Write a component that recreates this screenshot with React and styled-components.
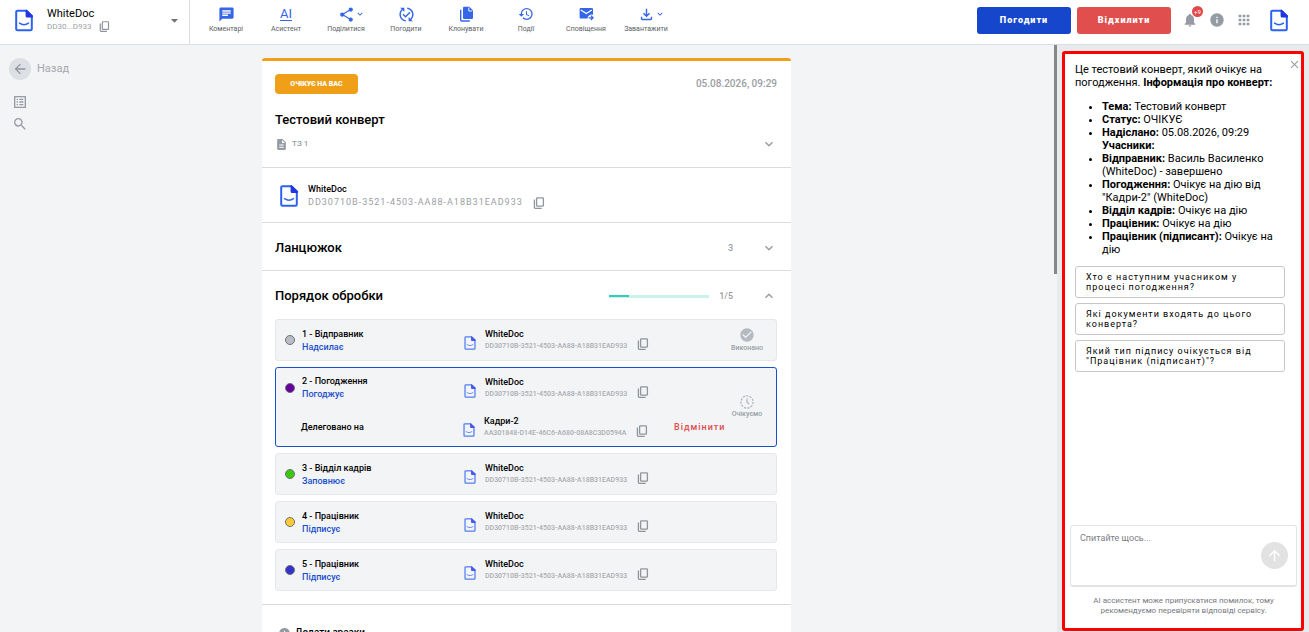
import React from "react";
import styled, { createGlobalStyle } from "styled-components";
import {
  MdChat, MdShare, MdPublishedWithChanges, MdHistory,
  MdOutlineFileDownload, MdExpandMore, MdExpandLess, MdArrowBack, MdListAlt, MdSearch,
  MdArrowDropDown, MdNotifications, MdInfo, MdApps, MdDescription, MdCheckCircle,
  MdClose, MdArrowUpward,
} from "react-icons/md";

const GlobalStyle = createGlobalStyle`
  * { box-sizing: border-box; }
  body { margin: 0; background: #f3f4f6; color: #000; font: 400 9px/14px Roboto, "Liberation Sans", sans-serif; }
  button { font: inherit; color: inherit; background: none; border: 0; padding: 0; cursor: pointer; }
  svg { display: block; flex: none; }
`;

const Page = styled.div`
  height: 100vh;
  display: flex;
  flex-direction: column;
  overflow: hidden;
`;

const Header = styled.header`
  display: flex;
  height: 45px;
  flex: none;
  background: #fff;
  border-bottom: 1px solid #dadde1;
`;

const Account = styled.button`
  display: flex;
  align-items: center;
  width: 190px;
  padding: 0 6px 4px 15px;
  border-right: 1px solid #dadde1;
  text-align: left;
`;

const AccountText = styled.span`
  flex: 1;
  margin-left: 14px;
`;

const AccountName = styled.span`
  display: block;
  font-size: 11px;
  line-height: 13px;
`;

const AccountId = styled.span`
  display: flex;
  align-items: center;
  gap: 7px;
  font-size: 8px;
  line-height: 13px;
  color: #9a9fa5;
`;

const Toolbar = styled.nav`
  display: flex;
  padding-left: 6px;
  flex: 1;
`;

const Tool = styled.button`
  width: 60px;
  display: flex;
  flex-direction: column;
  align-items: center;
  padding-top: 6px;
  gap: 1px;
  font-size: 7px;
  line-height: 13px;
  color: #5c6066;
`;

const ToolIcon = styled.span`
  display: flex;
  align-items: center;
  height: 16px;
  padding-left: ${(p) => (p.$menu ? 10 : 0)}px;
  color: #3565e8;
`;

const AiMark = styled.span`
  font-size: 13px;
  line-height: 13px;
  border-bottom: 1px solid #3565e8;
`;

const HeaderActions = styled.div`
  display: flex;
  align-items: center;
  padding: 0 21px 4px 0;
`;

const ActionButton = styled.button`
  width: 94px;
  height: 27px;
  margin-right: 6px;
  border-radius: 3px;
  background: ${(p) => p.$color};
  color: #fff;
  font-size: 9px;
  font-weight: 900;
  letter-spacing: 1px;
`;

const HeaderIcons = styled.div`
  display: flex;
  align-items: center;
  gap: 11px;
  margin: 0 18px 0 5px;
  color: #959ba3;
`;

const IconButton = styled.button`
  display: flex;
  position: relative;
  color: ${(p) => p.$color || "#959ba3"};
`;

const Badge = styled.span`
  position: absolute;
  top: -6px;
  right: -5px;
  width: 11px;
  height: 11px;
  border-radius: 50%;
  background: #e04a4a;
  color: #fff;
  font-size: 6px;
  line-height: 11px;
  text-align: center;
`;

const Body = styled.div`
  display: flex;
  flex: 1;
  min-height: 0;
`;

const Main = styled.main`
  flex: 1;
  min-width: 0;
  display: grid;
  grid-template-columns: 1fr minmax(0, 529px) 1fr;
  padding-top: 13px;
  overflow: hidden;
`;

const SideNav = styled.nav`
  display: flex;
  flex-direction: column;
  align-items: flex-start;
  gap: 6px;
  padding-left: 9px;
`;

const BackLink = styled.a`
  display: flex;
  align-items: center;
  gap: 6px;
  margin-bottom: 8px;
  font-size: 11px;
  color: #a3a8ae;
  text-decoration: none;
`;

const BackCircle = styled.span`
  display: grid;
  place-items: center;
  width: 22px;
  height: 22px;
  border-radius: 50%;
  background: #dcdfe3;
  color: #8f959c;
`;

const SideItem = styled(IconButton)`
  margin-left: 3px;
`;

const Scrollbar = styled.div`
  width: 4px;
  padding-left: 1px;
`;

const ScrollThumb = styled.div`
  height: 39%;
  background: #868789;
`;

const Card = styled.article`
  background: #fff;
  border-top: 3px solid #f09f19;
  border-radius: 3px 3px 0 0;
  align-self: start;
`;

const Section = styled.section`
  padding: ${(p) => p.$pad};
  border-bottom: 1px solid #d9dbde;
`;

const Line = styled.div`
  display: flex;
  align-items: center;
  gap: ${(p) => p.$gap || 0}px;
`;

const Status = styled.span`
  min-width: 83px;
  padding: 0 14px;
  border-radius: 4px;
  background: #f09f19;
  color: #fff;
  font-size: 7px;
  font-weight: 900;
  line-height: 20px;
  text-align: center;
`;

const Meta = styled.span`
  margin-left: ${(p) => (p.$end ? "auto" : 0)};
  font-size: ${(p) => p.$size || 9}px;
  font-weight: ${(p) => p.$weight || 500};
  color: #999ea4;
  letter-spacing: ${(p) => p.$track || 0}px;
`;

const Title = styled.h1`
  margin: 18px 0 8px;
  font-size: 13px;
  line-height: 16px;
  font-weight: 500;
`;

const Heading = styled.h2`
  flex: 1;
  margin: 0;
  font-size: ${(p) => p.$size || 13}px;
  line-height: 16px;
  font-weight: 500;
`;

const Toggle = styled(IconButton)`
  margin-left: ${(p) => p.$gap || "auto"};
`;

const Progress = styled.div`
  width: 100px;
  height: 3px;
  margin-right: 10px;
  background: #c9f2ea;
`;

const ProgressValue = styled.div`
  height: 2px;
  background: #36cdb8;
`;

const OwnerText = styled.div`
  line-height: 13px;
`;

const Strong = styled.div`
  font-weight: 500;
`;

const Steps = styled.ol`
  display: flex;
  flex-direction: column;
  gap: 6px;
  margin: 15px 0 0;
  padding: 0;
  list-style: none;
`;

const Step = styled.li`
  display: flex;
  padding: 0 6px 0 9px;
  border: 1px solid ${(p) => (p.$active ? "#1a4fcb" : "#e5e7ea")};
  border-radius: 3px;
  background: #f3f4f6;
`;

const StepBody = styled.div`
  flex: 1;
  min-width: 0;
`;

const StepRow = styled.div`
  display: flex;
  align-items: center;
  height: ${(p) => (p.$compact ? 39 : 40)}px;
`;

const Dot = styled.span`
  width: 10px;
  height: 10px;
  margin-right: 7px;
  border: 1px solid #6d7178;
  border-radius: 50%;
  background: ${(p) => p.$color};
`;

const StepName = styled.div`
  flex: none;
  width: ${(p) => (p.$indent ? 178 : 162)}px;
  padding-left: ${(p) => (p.$indent ? 16 : 0)}px;
  font-weight: 500;
`;

const Role = styled.div`
  color: #1a4fcb;
  line-height: 13px;
`;

const Org = styled.div`
  display: flex;
  align-items: flex-end;
  svg { margin-bottom: 2px; }
`;

const StepOrg = styled.div`
  width: 152px;
  margin-left: 9px;
  line-height: 12px;
  white-space: nowrap;
`;

const StepId = styled.div`
  font-size: 7px;
  font-weight: 500;
  color: #a9adb2;
`;

const Cancel = styled.button`
  margin-left: 26px;
  color: #dd4b4b;
  font-weight: 500;
  letter-spacing: 1px;
`;

const StepState = styled.div`
  display: flex;
  flex: none;
  flex-direction: column;
  align-items: center;
  justify-content: center;
  width: 46px;
  font-size: 7px;
  font-weight: 500;
  line-height: 10px;
  color: #999ea4;
`;

const Aside = styled.aside`
  display: flex;
  width: 252px;
  padding: 6px 5px 1px;
  background: #e9eaee;
`;

const Panel = styled.section`
  position: relative;
  display: flex;
  flex-direction: column;
  flex: 1;
  padding: 9px 4px 12px 5px;
  border: 3px solid #fe0000;
  border-radius: 3px;
  background: #fff;
`;

const CloseButton = styled(IconButton)`
  position: absolute;
  top: 4px;
  right: 0;
`;

const Message = styled.div`
  padding: 0 12px 0 5px;
  font-size: 11px;
  line-height: 13px;

  p { margin: 0; }
  ul { margin: 11px 0 10px; padding-left: 27px; }
`;

const Suggestions = styled.div`
  display: flex;
  flex-direction: column;
  gap: 5px;
  padding: 0 12px 0 5px;
`;

const Suggestion = styled.button`
  padding: 5px 10px;
  border: 1px solid #c6c7c9;
  border-radius: 3px;
  font-size: 9px;
  line-height: 10px;
  letter-spacing: 1px;
  text-align: left;
`;

const Prompt = styled.form`
  display: flex;
  align-items: center;
  height: 62px;
  margin-top: auto;
  padding-right: 8px;
  border: 1px solid #e2e4e6;
  border-bottom-width: 2px;
  border-radius: 3px;
`;

const PromptInput = styled.textarea`
  flex: 1;
  align-self: stretch;
  min-width: 0;
  padding: 5px 9px;
  border: 0;
  outline: 0;
  resize: none;
  background: none;
  font: 400 9px/14px Roboto, "Liberation Sans", sans-serif;
  &::placeholder { color: #7d8085; }
`;

const Send = styled.button`
  display: grid;
  place-items: center;
  width: 27px;
  height: 27px;
  border-radius: 50%;
  background: #e2e2e2;
  color: #fff;
`;

const Note = styled.p`
  margin: 9px 0 0;
  padding: 0 16px;
  font-size: 8px;
  line-height: 10px;
  color: #75797f;
  text-align: center;
`;

const DocLogo = ({ width = 18, height = 22, soft = false }) => (
  <svg width={width} height={height} viewBox="0 0 18 22" fill="none" opacity={soft ? 0.8 : 1}>
    <path d="M2.5 1.2H11l5.8 5.6v12.7a1.3 1.3 0 0 1-1.3 1.3h-13a1.3 1.3 0 0 1-1.3-1.3v-17a1.3 1.3 0 0 1 1.3-1.3Z" stroke="#2c62f2" strokeWidth="2" />
    <path d="M10.6.2h1.3l6 5.8v1.9h-5.8a1.5 1.5 0 0 1-1.5-1.5Z" fill="#1f36e0" />
    <path d="M4.5 13.6c2.8 2 6.2 2 9 0" stroke="#2c62f2" strokeWidth="1.4" strokeLinecap="round" />
  </svg>
);

const CopyIcon = ({ size = 12, color = "#8f959c" }) => (
  <svg width={size} height={size} viewBox="0 0 12 12" fill="none" stroke={color} strokeWidth="1.3">
    <rect x="3.6" y="0.8" width="6.8" height="8.4" rx="0.8" />
    <path d="M1.4 2.6v7.8a.9.9 0 0 0 .9.9h6.4" />
  </svg>
);

const ClonePagesIcon = () => (
  <svg width="15" height="16" viewBox="0 0 15 16" fill="none">
    <path d="M5.2.8h5.1l3.700 3.700v7.200a1.200 1.200 0 0 1-1.200 1.200H5.200A1.200 1.200 0 0 1 4 11.700V2A1.200 1.200 0 0 1 5.200.8Z" fill="currentColor" />
    <path d="M9.800 1.600v3.400h3.400" stroke="#fff" strokeWidth="0.9" />
    <path d="M1.700 3.800v10.200a1 1 0 0 0 1 1h8.100" stroke="currentColor" strokeWidth="1.400" />
  </svg>
);

const ForwardMailIcon = () => (
  <svg width="15" height="14" viewBox="0 0 15 14" fill="none">
    <path d="M1.800 1h11a1.200 1.200 0 0 1 1.200 1.200v5.600a4 4 0 0 0-5.500 3.700H1.800a1.200 1.200 0 0 1-1.200-1.200V2.200A1.200 1.200 0 0 1 1.800 1Z" fill="currentColor" />
    <path d="m1.800 3 5.500 3.500L12.800 3" stroke="#fff" strokeWidth="1.200" />
    <path d="M9.600 10.800h4.200m-1.900-2.200 2.200 2.200-2.200 2.200" stroke="currentColor" strokeWidth="1.300" />
  </svg>
);

const WaitingIcon = () => (
  <svg width="14" height="14" viewBox="0 0 14 14" fill="none" stroke="#b3b7bc" strokeWidth="1.3">
    <circle cx="7" cy="7" r="6.1" strokeDasharray="2.2 1.2" />
    <path d="M7 3.6V7l2.2 2.3" />
  </svg>
);

const CopyButton = () => (
  <IconButton aria-label="Копіювати"><CopyIcon /></IconButton>
);

const OwnerCopy = styled.div`
  align-self: flex-end;
`;

const tools = [
  { label: "Коментарі", icon: <MdChat size={17} /> },
  { label: "Асистент", icon: <AiMark>AI</AiMark> },
  { label: "Поділитися", icon: <MdShare size={17} />, menu: true },
  { label: "Погодити", icon: <MdPublishedWithChanges size={17} /> },
  { label: "Клонувати", icon: <ClonePagesIcon /> },
  { label: "Події", icon: <MdHistory size={16} /> },
  { label: "Сповіщення", icon: <ForwardMailIcon /> },
  { label: "Завантажити", icon: <MdOutlineFileDownload size={17} />, menu: true },
];

const companyId = "DD30710B-3521-4503-AA88-A18B31EAD933";

const steps = [
  { name: "1 - Відправник", role: "Надсилає", color: "#b9bec6", state: "done" },
  {
    name: "2 - Погодження", role: "Погоджує", color: "#65009c", state: "waiting",
    delegate: { name: "Кадри-2", id: "AA301848-D14E-46C6-A680-08A8C3D0594A" },
  },
  { name: "3 - Відділ кадрів", role: "Заповнює", color: "#3bc90b" },
  { name: "4 - Працівник", role: "Підписує", color: "#ffc933" },
  { name: "5 - Працівник", role: "Підписує", color: "#3333cc" },
];

const facts = [
  ["Тема:", "Тестовий конверт"],
  ["Статус:", "ОЧІКУЄ"],
  ["Надіслано:", "05.08.2026, 09:29", "Учасники:"],
  ["Відправник:", "Василь Василенко (WhiteDoc) - завершено"],
  ["Погодження:", "Очікує на дію від \"Кадри-2\" (WhiteDoc)"],
  ["Відділ кадрів:", "Очікує на дію"],
  ["Працівник:", "Очікує на дію"],
  ["Працівник (підписант):", "Очікує на дію"],
];

const questions = [
  "Хто є наступним учасником у процесі погодження?",
  "Які документи входять до цього конверта?",
  "Який тип підпису очікується від \"Працівник (підписант)\"?",
];

function Organisation({ name, id }) {
  return (
    <Org>
      <DocLogo width={12} height={14} soft />
      <StepOrg>
        <Strong>{name}</Strong>
        <StepId>{id}</StepId>
      </StepOrg>
      <CopyButton />
    </Org>
  );
}

function StepItem({ step }) {
  const compact = Boolean(step.delegate);
  return (
    <Step $active={compact}>
      <StepBody>
        <StepRow $compact={compact}>
          <Dot $color={step.color} />
          <StepName>
            {step.name}
            <Role>{step.role}</Role>
          </StepName>
          <Organisation name="WhiteDoc" id={companyId} />
        </StepRow>
        {step.delegate && (
          <StepRow $compact>
            <StepName $indent>Делеговано на</StepName>
            <Organisation {...step.delegate} />
            <Cancel>Відмінити</Cancel>
          </StepRow>
        )}
      </StepBody>
      <StepState>
        {step.state === "done" && <><MdCheckCircle size={16} color="#b5bac0" />Виконано</>}
        {step.state === "waiting" && <><WaitingIcon />Очікуємо</>}
      </StepState>
    </Step>
  );
}

export default function App() {
  return (
    <Page>
      <GlobalStyle />
      <Header>
        <Account>
          <DocLogo width={18} height={23} />
          <AccountText>
            <AccountName>WhiteDoc</AccountName>
            <AccountId>DD30...D933 <CopyIcon size={11} /></AccountId>
          </AccountText>
          <MdArrowDropDown size={17} color="#6f7378" />
        </Account>
        <Toolbar>
          {tools.map((t) => (
            <Tool key={t.label}>
              <ToolIcon $menu={t.menu}>{t.icon}{t.menu && <MdExpandMore size={10} />}</ToolIcon>
              {t.label}
            </Tool>
          ))}
        </Toolbar>
        <HeaderActions>
          <ActionButton $color="#1546cc">Погодити</ActionButton>
          <ActionButton $color="#e04e4e">Відхилити</ActionButton>
          <HeaderIcons>
            <IconButton aria-label="Повідомлення"><MdNotifications size={16} /><Badge>+9</Badge></IconButton>
            <IconButton aria-label="Довідка"><MdInfo size={16} /></IconButton>
            <IconButton aria-label="Застосунки"><MdApps size={16} /></IconButton>
          </HeaderIcons>
          <DocLogo width={18} height={23} />
        </HeaderActions>
      </Header>

      <Body>
        <Main>
          <SideNav>
            <BackLink href="#"><BackCircle><MdArrowBack size={16} /></BackCircle>Назад</BackLink>
            <SideItem aria-label="Список"><MdListAlt size={16} /></SideItem>
            <SideItem aria-label="Пошук"><MdSearch size={16} /></SideItem>
          </SideNav>
          <Card>
            <Section $pad="13px 14px 15px 13px">
              <Line>
                <Status>ОЧІКУЄ НА ВАС</Status>
                <Meta $end $size={10}>05.08.2026, 09:29</Meta>
              </Line>
              <Title>Тестовий конверт</Title>
              <Line $gap={4}>
                <MdDescription size={13} color="#959ba3" />
                <Meta $size={8}>ТЗ 1</Meta>
                <Toggle aria-label="Розгорнути"><MdExpandMore size={16} /></Toggle>
              </Line>
            </Section>
            <Section $pad="15px 18px 13px">
              <Line $gap={10}>
                <DocLogo width={18} height={22} />
                <OwnerText>
                  <Strong>WhiteDoc</Strong>
                  <Meta $weight={400} $track={1}>{companyId}</Meta>
                </OwnerText>
                <OwnerCopy><CopyButton /></OwnerCopy>
              </Line>
            </Section>
            <Section $pad="17px 14px 14px 13px">
              <Line>
                <Heading>Ланцюжок</Heading>
                <Meta>3</Meta>
                <Toggle $gap="28px" aria-label="Розгорнути"><MdExpandMore size={16} /></Toggle>
              </Line>
            </Section>
            <Section $pad="17px 14px 13px 13px">
              <Line>
                <Heading>Порядок обробки</Heading>
                <Progress role="progressbar" aria-label="Порядок обробки" aria-valuenow={1} aria-valuemax={5}>
                  <ProgressValue style={{ width: `${(1 / 5) * 100}%` }} />
                </Progress>
                <Meta>1/5</Meta>
                <Toggle $gap="28px" aria-label="Згорнути"><MdExpandLess size={16} /></Toggle>
              </Line>
              <Steps>
                {steps.map((s) => <StepItem key={s.name} step={s} />)}
              </Steps>
            </Section>
            <Section $pad="20px 16px">
              <Line $gap={4}>
                <MdInfo size={13} color="#959ba3" />
                <Heading $size={10}>Додати зразки</Heading>
              </Line>
            </Section>
          </Card>
        </Main>
        <Scrollbar><ScrollThumb /></Scrollbar>
        <Aside>
          <Panel>
            <CloseButton aria-label="Закрити"><MdClose size={13} /></CloseButton>
            <Message>
              <p>Це тестовий конверт, який очікує на погодження. <b>Інформація про конверт:</b></p>
              <ul>
                {facts.map(([key, value, extra]) => (
                  <li key={key}><b>{key}</b> {value}{extra && <><br /><b>{extra}</b></>}</li>
                ))}
              </ul>
            </Message>
            <Suggestions>
              {questions.map((q) => <Suggestion key={q}>{q}</Suggestion>)}
            </Suggestions>
            <Prompt>
              <PromptInput aria-label="Запитання" placeholder="Спитайте щось..." />
              <Send type="button" aria-label="Надіслати"><MdArrowUpward size={17} /></Send>
            </Prompt>
            <Note>АІ ассистент може припускатися помилок, тому рекомендуємо перевіряти відповіді сервісу.</Note>
          </Panel>
        </Aside>
      </Body>
    </Page>
  );
}
